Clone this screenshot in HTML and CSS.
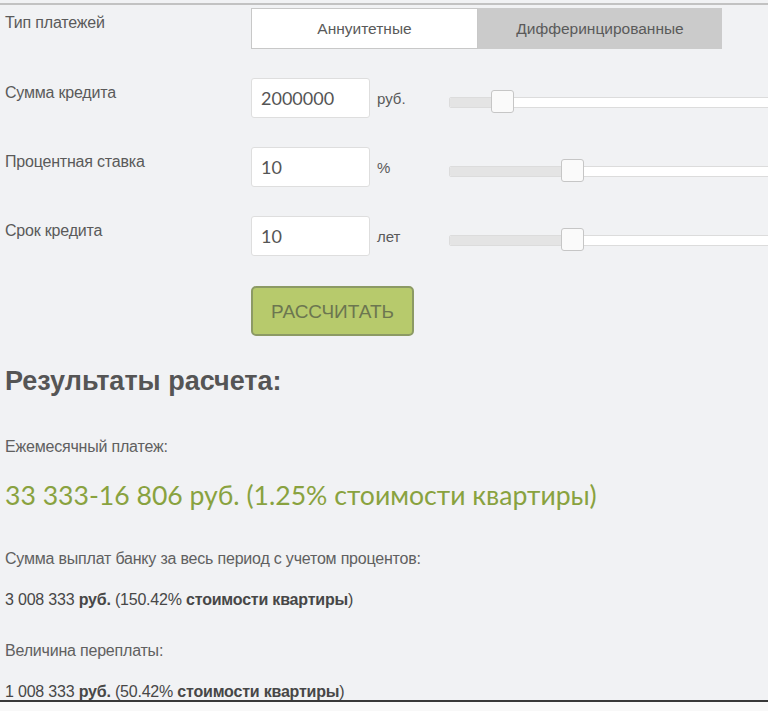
FILE: index.html
```html
<!DOCTYPE html>
<html lang="ru">
<head>
<meta charset="utf-8">
<title>Кредитный калькулятор</title>
<link rel="stylesheet" href="styles.css">
</head>
<body>
<div class="frame">
  <div class="topline"></div>
  <div class="form">
    <div class="row">
      <div class="label">Тип платежей</div>
      <div class="toggle">
        <div class="opt opt-active">Аннуитетные</div>
        <div class="opt opt-off">Дифферинцированные</div>
      </div>
    </div>
    <div class="row">
      <div class="label">Сумма кредита</div>
      <div class="controls">
        <div class="input">2000000</div>
        <div class="unit">руб.</div>
        <div class="slider">
          <div class="track"><div class="fill" style="width:44px"></div></div>
          <div class="thumb" style="left:42px"></div>
        </div>
      </div>
    </div>
    <div class="row">
      <div class="label">Процентная ставка</div>
      <div class="controls">
        <div class="input">10</div>
        <div class="unit">%</div>
        <div class="slider">
          <div class="track"><div class="fill" style="width:114px"></div></div>
          <div class="thumb" style="left:112px"></div>
        </div>
      </div>
    </div>
    <div class="row">
      <div class="label">Срок кредита</div>
      <div class="controls">
        <div class="input">10</div>
        <div class="unit">лет</div>
        <div class="slider">
          <div class="track"><div class="fill" style="width:114px"></div></div>
          <div class="thumb" style="left:112px"></div>
        </div>
      </div>
    </div>
    <div class="row row-btn">
      <div></div>
      <div><button class="calc">РАССЧИТАТЬ</button></div>
    </div>
  </div>
  <div class="results">
    <h2 class="title">Результаты расчета:</h2>
    <p class="caption cap-first">Ежемесячный платеж:</p>
    <p class="big">33 333-16 806 руб. (1.25% стоимости квартиры)</p>
    <p class="caption cap-second">Сумма выплат банку за весь период с учетом процентов:</p>
    <p class="value">3 008 333 <b>руб.</b> (150.42% <b>стоимости квартиры</b>)</p>
    <p class="caption cap-third">Величина переплаты:</p>
    <p class="value">1 008 333 <b>руб.</b> (50.42% <b>стоимости квартиры</b>)</p>
  </div>
</div>
</body>
</html>
```
FILE: styles.css
```css
html {
  background: #f8f8f8;
}
body {
  margin: 0;
  overflow: hidden;
  font-family: "Liberation Sans", Arial, sans-serif;
  color: #5a5a5a;
}
.frame {
  background: #f1f2f4;
  padding-top: 3px;
  border-bottom: 2px solid #383838;
  height: 697px;
}
.topline {
  height: 2px;
  background: #c2c2c2;
}
.form {
  padding: 3px 0 0 5px;
  display: flex;
  flex-direction: column;
  gap: 29px;
}
.row {
  display: grid;
  grid-template-columns: 246px auto;
}
.label {
  font-size: 16px;
  line-height: 20px;
  padding-top: 5px;
  letter-spacing: -0.2px;
}
.toggle {
  display: flex;
  width: 471px;
  height: 41px;
}
.opt {
  display: flex;
  align-items: center;
  justify-content: center;
  font-size: 15.5px;
  color: #5a5a5a;
}
.opt-active {
  width: 225px;
  background: #fff;
  border: 1px solid #c8c8c8;
}
.opt-off {
  flex: 1;
  background: #cbcbcb;
}
.controls {
  display: flex;
  align-items: center;
}
.input {
  width: 108px;
  height: 38px;
  padding-left: 9px;
  background: #fff;
  border: 1px solid #dedede;
  border-radius: 3px;
  display: flex;
  align-items: center;
  font-family: Lato, sans-serif;
  font-size: 18px;
  color: #555;
}
.unit {
  width: 72px;
  margin-left: 7px;
  font-size: 15px;
}
.slider {
  position: relative;
  width: 340px;
  height: 24px;
  margin-top: 7px;
}
.track {
  position: absolute;
  left: 0;
  right: 0;
  top: 7px;
  height: 9px;
  background: #fff;
  border: 1px solid #dcdcdc;
  border-radius: 2px;
  overflow: hidden;
}
.fill {
  height: 100%;
  background: #e4e4e4;
}
.thumb {
  position: absolute;
  top: 0;
  width: 21px;
  height: 21px;
  background: #fafafa;
  border: 1px solid #c6c6c6;
  border-radius: 3px;
}
.row-btn {
  margin-top: 1px;
}
.calc {
  width: 163px;
  height: 50px;
  background: #b7ca6c;
  border: 2px solid #8c9a64;
  border-radius: 5px;
  font-family: "Liberation Sans", Arial, sans-serif;
  font-size: 19px;
  padding: 2px 0 0;
  color: #6c7650;
}
.results {
  padding-left: 5px;
}
.title {
  margin: 30px 0 0;
  font-size: 27px;
  line-height: 30px;
  font-weight: bold;
  color: #555;
}
.caption, .value {
  margin: 0;
  font-size: 16px;
  line-height: 20px;
  color: #606060;
  letter-spacing: -0.2px;
}
.value {
  color: #474747;
}
.value b {
  font-weight: bold;
}
.cap-first { margin-top: 41px; }
.big {
  margin: 22px 0 0;
  font-family: Lato, sans-serif;
  font-size: 26.6px;
  line-height: 32px;
  color: #89a23f;
}
.cap-second { margin-top: 38px; }
.value { margin-top: 21px; }
.cap-third { margin-top: 31px; }
```
